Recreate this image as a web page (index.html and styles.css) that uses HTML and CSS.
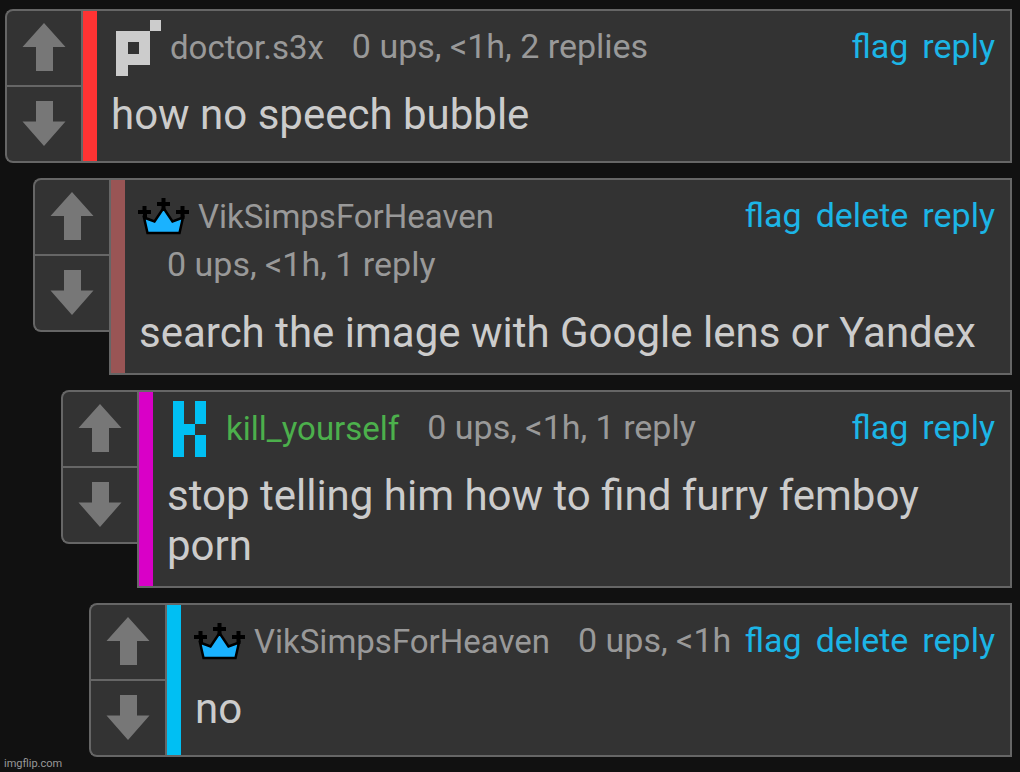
FILE: index.html
```html
<!DOCTYPE html>
<html lang="en">
<head>
<meta charset="utf-8">
<title>Comments</title>
<link rel="stylesheet" href="styles.css">
</head>
<body>
<svg class="defs" aria-hidden="true">
  <symbol id="up" viewBox="0 0 74 74"><path d="M37 12 58.500 36H46V60H29V36H15.500Z"/></symbol>
  <symbol id="down" viewBox="0 0 74 74"><path d="M29 14H46V34.500H58.500L37 59 15.500 34.500H29Z"/></symbol>
  <symbol id="crown" viewBox="0 0 50 56">
    <path d="M5 28.500 15.500 32.500 24.500 19 33.500 32.500 44 28.500 40.500 44H8.500Z" fill="#1ab2ff" stroke="#000" stroke-width="2.500"/>
    <path d="M22.500 9h4v4h4.500v4h-4.500v5h-4v-5H18v-4h4.500zM3.500 17h4v4h4.500v4h-4v5h-4v-5H-1v-4h4.500zM41.500 17h4v4h4.500v4h-4.500v5h-4v-5H37v-4h4.500z"/>
  </symbol>
</svg>
<main class="thread">
  <article class="comment">
    <div class="votes">
      <button class="vote" aria-label="Upvote"><svg><use href="#up"/></svg></button>
      <button class="vote" aria-label="Downvote"><svg><use href="#down"/></svg></button>
    </div>
    <div class="card">
      <div class="stripe red"></div>
      <div class="content">
        <header class="head">
          <div class="info">
            <a class="user" href="#"><svg class="icon" viewBox="0 0 50 56" shape-rendering="crispEdges"><path fill="#ccc" fill-rule="evenodd" d="M39 0H50V11H39V45H17V56H5V11H39ZM17 22V34H28V22Z"/></svg>doctor.s3x</a>
            <span class="meta">0 ups, &lt;1h, 2 replies</span>
          </div>
          <nav class="actions"><a href="#">flag</a><a href="#">reply</a></nav>
        </header>
        <p class="text">how no speech bubble</p>
      </div>
    </div>
  </article>
  <div class="replies">
    <article class="comment">
      <div class="votes">
        <button class="vote" aria-label="Upvote"><svg><use href="#up"/></svg></button>
        <button class="vote" aria-label="Downvote"><svg><use href="#down"/></svg></button>
      </div>
      <div class="card">
        <div class="stripe rose"></div>
        <div class="content">
          <header class="head">
            <div class="info">
              <a class="user" href="#"><svg class="icon"><use href="#crown"/></svg>VikSimpsForHeaven</a>
              <span class="meta">0 ups, &lt;1h, 1 reply</span>
            </div>
            <nav class="actions"><a href="#">flag</a><a href="#">delete</a><a href="#">reply</a></nav>
          </header>
          <p class="text">search the image with Google lens or Yandex</p>
        </div>
      </div>
    </article>
    <div class="replies">
      <article class="comment">
        <div class="votes">
          <button class="vote" aria-label="Upvote"><svg><use href="#up"/></svg></button>
          <button class="vote" aria-label="Downvote"><svg><use href="#down"/></svg></button>
        </div>
        <div class="card">
          <div class="stripe magenta"></div>
          <div class="content">
            <header class="head">
              <div class="info">
                <a class="user green" href="#"><svg class="icon" viewBox="0 0 50 56" shape-rendering="crispEdges"><path fill="#00bff3" d="M6 0H17V23H28V0H39V23H28V34H39V56H28V34H17V56H6Z"/></svg>kill_yourself</a>
                <span class="meta">0 ups, &lt;1h, 1 reply</span>
              </div>
              <nav class="actions"><a href="#">flag</a><a href="#">reply</a></nav>
            </header>
            <p class="text">stop telling him how to find furry femboy porn</p>
          </div>
        </div>
      </article>
      <div class="replies">
        <article class="comment">
          <div class="votes">
            <button class="vote" aria-label="Upvote"><svg><use href="#up"/></svg></button>
            <button class="vote" aria-label="Downvote"><svg><use href="#down"/></svg></button>
          </div>
          <div class="card">
            <div class="stripe blue"></div>
            <div class="content">
              <header class="head">
                <div class="info">
                  <a class="user" href="#"><svg class="icon"><use href="#crown"/></svg>VikSimpsForHeaven</a>
                  <span class="meta">0 ups, &lt;1h</span>
                </div>
                <nav class="actions"><a href="#">flag</a><a href="#">delete</a><a href="#">reply</a></nav>
              </header>
              <p class="text">no</p>
            </div>
          </div>
        </article>
      </div>
    </div>
  </div>
</main>
<footer class="site">imgflip.com</footer>
</body>
</html>
```

FILE: styles.css
```css
* { box-sizing: border-box; }
body {
  margin: 0;
  background: #111;
  color: #ccc;
  font-family: Roboto, "Liberation Sans", sans-serif;
}
a { color: inherit; text-decoration: none; }
.defs { position: absolute; width: 0; height: 0; }
.thread { padding: 9px 8px 0 5px; }
.replies { padding: 15px 0 0 28px; }
.comment { display: flex; align-items: stretch; }
.votes {
  flex: none;
  align-self: flex-start;
  width: 76px;
  border: 2px solid #666;
  border-right: 0;
  border-radius: 8px 0 0 8px;
  background: #333;
}
.vote {
  display: block;
  width: 74px;
  height: 74px;
  padding: 0;
  border: 0;
  background: none;
}
.vote + .vote { height: 76px; border-top: 2px solid #666; }
.vote svg { display: block; width: 74px; height: 74px; fill: #777; }
.card {
  flex: 1;
  min-width: 0;
  display: flex;
  border: 2px solid #666;
  background: #333;
}
.stripe { flex: none; width: 14px; }
.red { background: #f33; }
.rose { background: #955; }
.magenta { background: #d900c7; }
.blue { background: #00bff3; }
.content { flex: 1; min-width: 0; padding: 11px 15px 15px 14px; }
.head { display: flex; align-items: flex-start; font-size: 34px; line-height: 49px; }
.info { flex: 1; min-width: 0; display: flex; flex-wrap: wrap; color: #999; }
.user { display: flex; align-items: center; margin: 1px 0 -1px; font-size: 33px; white-space: nowrap; }
.icon { flex: none; width: 50px; height: 56px; margin: -4px 9px -4px 0; overflow: visible; }
.icon use, #crown { overflow: visible; }
.green { color: #4cb04c; }
.meta { margin-left: 28px; white-space: nowrap; }
.actions { flex: none; display: flex; gap: 14px; color: #1cb5e6; }
.text { margin: 19px 0 0; font-size: 42px; line-height: 50px; }
.site { padding-left: 4px; font-size: 11px; line-height: 13px; color: #999; }
```
